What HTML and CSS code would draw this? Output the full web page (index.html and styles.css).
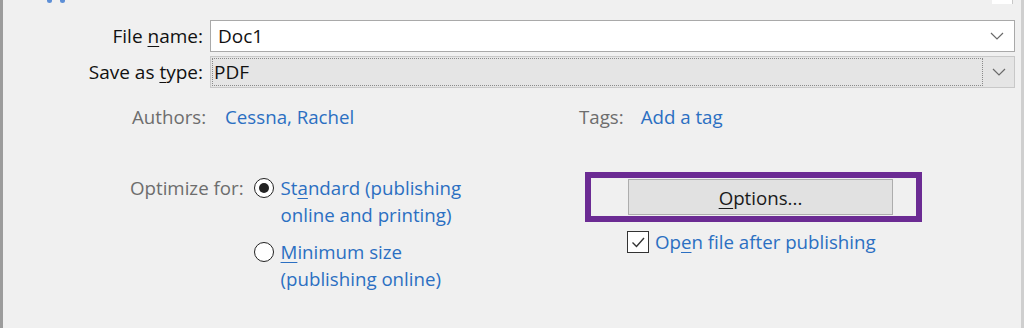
FILE: index.html
```html
<!DOCTYPE html>
<html>
<head>
<meta charset="utf-8">
<link rel="stylesheet" href="styles.css">
</head>
<body>
<div class="dialog">
  <div class="topstrip">
    <span class="desc"></span>
    <span class="desc"></span>
    <span class="topbox"></span>
  </div>

  <div class="fields">
    <label class="flabel">File <u>n</u>ame:</label>
    <div class="input">
      <span class="value">Doc1</span>
      <svg class="chev" width="14" height="8" viewBox="0 0 14 8"><path d="M1 1 L7 7 L13 1" fill="none" stroke="#6a6a6a" stroke-width="1.2"/></svg>
    </div>
    <label class="flabel">Save as <u>t</u>ype:</label>
    <div class="select">
      <div class="focus"><span class="value">PDF</span></div>
      <div class="dropbtn">
        <svg class="chev" width="14" height="8" viewBox="0 0 14 8"><path d="M1 1 L7 7 L13 1" fill="none" stroke="#6a6a6a" stroke-width="1.2"/></svg>
      </div>
    </div>
  </div>

  <div class="meta">
    <div class="metaitem authors">
      <span class="mlabel">Authors:</span>
      <span class="link">Cessna, Rachel</span>
    </div>
    <div class="metaitem tags">
      <span class="mlabel">Tags:</span>
      <span class="link">Add a tag</span>
    </div>
  </div>

  <div class="lower">
    <div class="optimize">
      <span class="mlabel optlabel">Optimize for:</span>
      <div class="radios">
        <div class="radio">
          <span class="dot checked"></span>
          <span class="link">St<u>a</u>ndard (publishing<br>online and printing)</span>
        </div>
        <div class="radio">
          <span class="dot"></span>
          <span class="link"><u>M</u>inimum size<br>(publishing online)</span>
        </div>
      </div>
    </div>
    <div class="right">
      <div class="highlight">
        <div class="button"><u>O</u>ptions...</div>
      </div>
      <div class="check">
        <span class="box">
          <svg width="18" height="18" viewBox="0 0 18 18"><path d="M3.5 9.5 L7.5 13.5 L15 5" fill="none" stroke="#333" stroke-width="1.4"/></svg>
        </span>
        <span class="link">Op<u>e</u>n file after publishing</span>
      </div>
    </div>
  </div>
</div>
</body>
</html>
```

FILE: styles.css
```css
html, body {
  margin: 0;
  padding: 0;
  background: #f0f0f0;
}
body {
  width: 1024px;
  height: 328px;
  overflow: hidden;
  font-family: "Open Sans", "Noto Sans", sans-serif;
  font-size: 18px;
  color: #1a1a1a;
}
u { text-decoration-thickness: 1px; text-underline-offset: 3px; }
.dialog {
  box-sizing: border-box;
  width: 1024px;
  height: 328px;
  border-left: 3px solid #9c9c9c;
  border-right: 3px solid #cfcfcf;
  background: #f0f0f0;
  display: flex;
  flex-direction: column;
}
.topstrip {
  height: 4px;
  display: flex;
  align-items: flex-start;
  padding-left: 44px;
  gap: 8px;
}
.desc {
  width: 5px;
  height: 3px;
  border-radius: 0 0 3px 3px;
  background: #5d8fd6;
}
.topbox {
  margin-left: auto;
  margin-right: 8px;
  width: 20px;
  height: 4px;
  background: #fff;
  border-right: 1px solid #c8c8c8;
}
.fields {
  margin-top: 16px;
  display: grid;
  grid-template-columns: 200px 805px;
  grid-auto-rows: 32px;
  column-gap: 7px;
  row-gap: 4px;
}
.flabel {
  text-align: right;
  align-self: center;
  font-size: 19px;
  color: #111;
}
.input {
  box-sizing: border-box;
  background: #fff;
  border: 1px solid #a9a9a9;
  display: flex;
  align-items: center;
  padding: 0 10px 0 7px;
}
.value { font-size: 19px; flex: 1; color: #111; }
.select {
  box-sizing: border-box;
  background: #e5e5e5;
  border: 1px solid #c8c8c8;
  display: flex;
  padding: 1px 0 1px 1px;
}
.focus {
  flex: 1;
  border: 1px dotted #8a8a8a;
  display: flex;
  align-items: center;
  padding-left: 1px;
}
.dropbtn {
  width: 31px;
  display: flex;
  align-items: center;
  justify-content: center;
}
.meta {
  margin-top: 14px;
  display: flex;
  height: 28px;
  align-items: center;
}
.metaitem { display: flex; align-items: center; }
.authors { margin-left: 129px; width: 447px; gap: 19px; }
.tags { gap: 17px; }
.mlabel { color: #6d6d6d; font-size: 18.7px; }
.link { color: #2b6fc2; font-size: 18.7px; line-height: 27px; }
.lower {
  margin-top: 44px;
  display: flex;
}
.optimize {
  margin-left: 127px;
  width: 455px;
  display: flex;
  gap: 10px;
}
.optlabel { line-height: 27px; }
.radios { display: flex; flex-direction: column; gap: 10px; }
.radio { display: flex; gap: 7px; align-items: flex-start; }
.dot {
  box-sizing: border-box;
  width: 20px;
  height: 20px;
  margin-top: 4px;
  border: 1.5px solid #222;
  border-radius: 50%;
  background: #fff;
  display: flex;
  align-items: center;
  justify-content: center;
}
.dot.checked::after {
  content: "";
  width: 10px;
  height: 10px;
  border-radius: 50%;
  background: #222;
}
.right {
  display: flex;
  flex-direction: column;
  margin-top: -2px;
}
.highlight {
  width: 337px;
  height: 50px;
  box-sizing: border-box;
  border: 6px solid #6b2b93;
  display: flex;
  align-items: center;
  padding-left: 37px;
}
.button {
  box-sizing: border-box;
  width: 265px;
  height: 36px;
  background: #e1e1e1;
  border: 1px solid #adadad;
  display: flex;
  align-items: center;
  justify-content: center;
  font-size: 18.7px;
  color: #1a1a1a;
}
.check {
  margin-top: 6px;
  margin-left: 42px;
  display: flex;
  align-items: center;
  gap: 6px;
}
.box {
  box-sizing: border-box;
  width: 22px;
  height: 22px;
  border: 1px solid #333;
  background: #fff;
  display: flex;
  align-items: center;
  justify-content: center;
}
```
